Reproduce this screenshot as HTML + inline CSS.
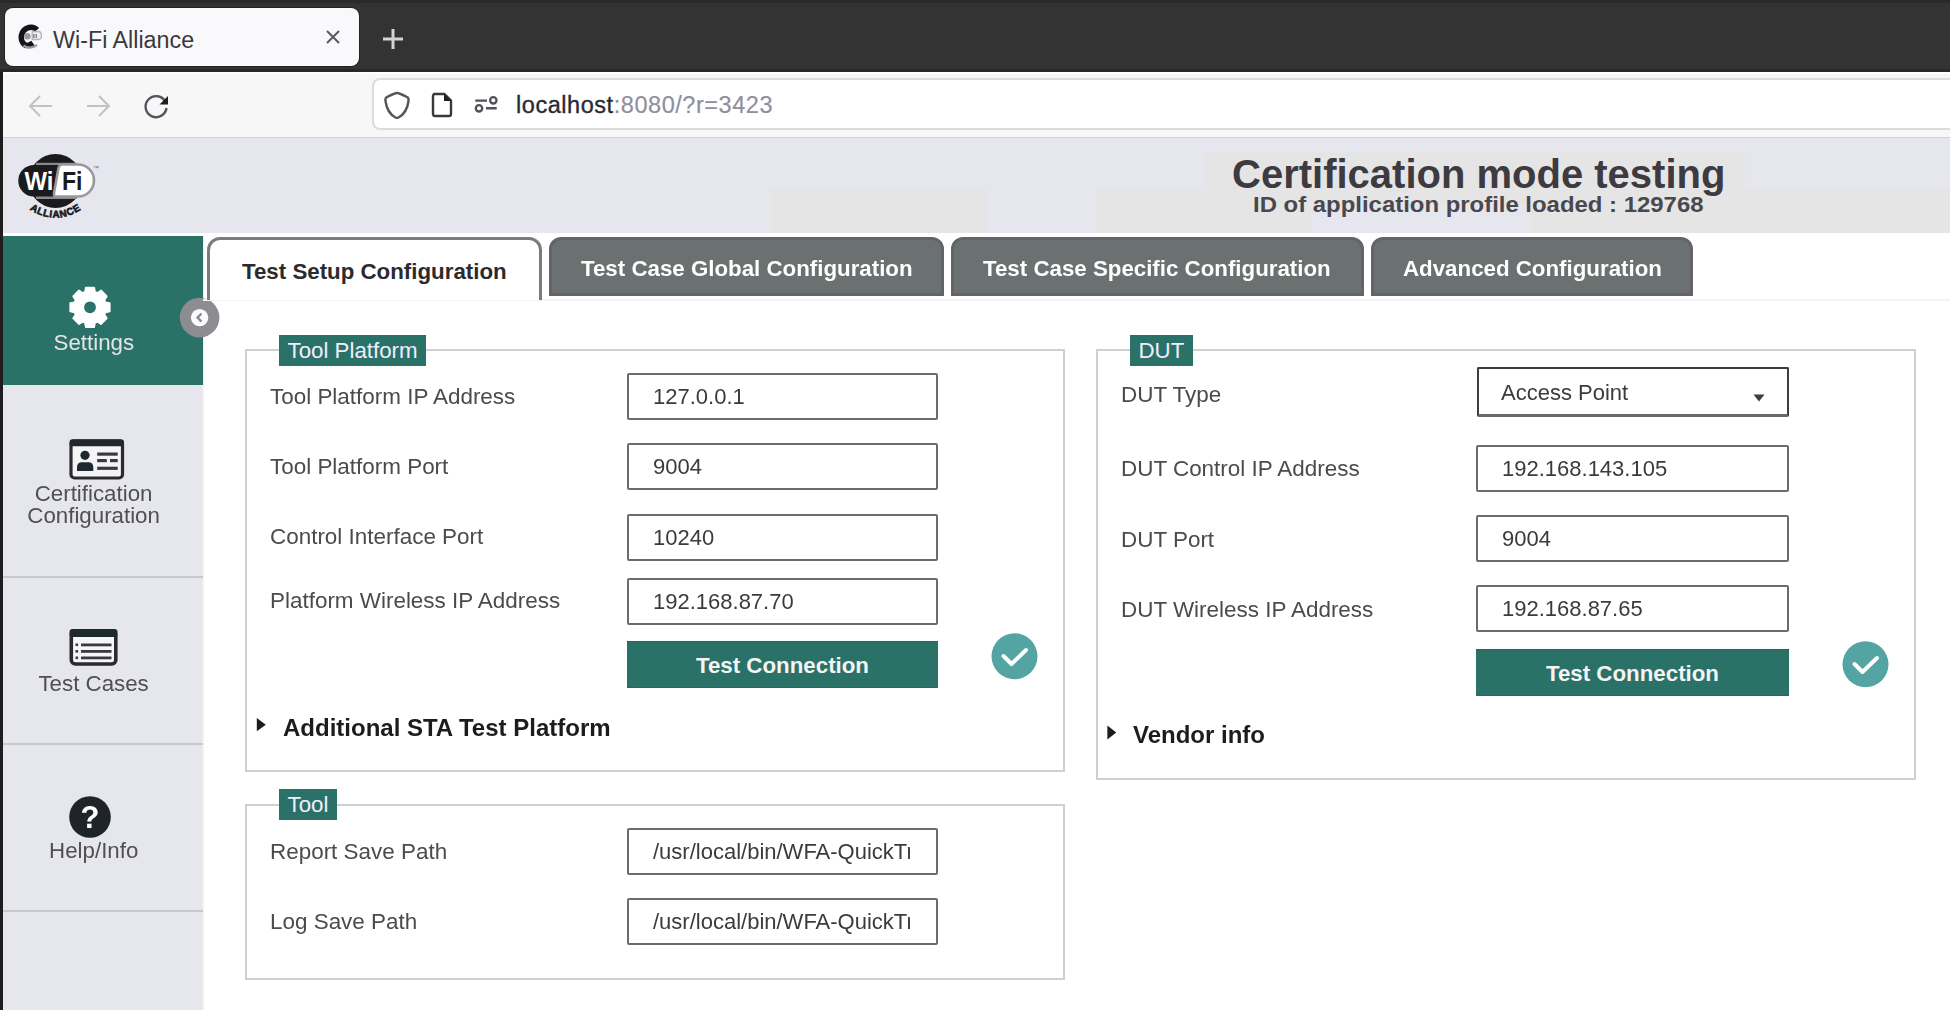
<!DOCTYPE html>
<html><head><meta charset="utf-8">
<style>
*{box-sizing:border-box}
html,body{margin:0;padding:0}
body{width:1950px;height:1010px;overflow:hidden;position:relative;background:#fff;font-family:"Liberation Sans",sans-serif}
.a{position:absolute}
.t{white-space:nowrap;line-height:1}
/* browser chrome */
#strip{left:0;top:0;width:1950px;height:72px;background:#333;border-top:3px solid #2a2a2a;border-bottom:3px solid #282828}
#btab{left:5px;top:8px;width:354px;height:58px;background:#f9f9fb;border-radius:8px;box-shadow:0 0 0 1px #222}
#nav{left:3px;top:72px;width:1947px;height:66px;background:#f7f7f7;border-top:2px solid #fff;border-bottom:1px solid #d4d4d4}
#url{left:372px;top:78px;width:1600px;height:52px;background:#fff;border:2px solid #dcdcdc;border-radius:8px}
#lborder{left:0;top:72px;width:3px;height:938px;background:#1e1c1f}
/* header */
#hdr{left:3px;top:138px;width:1947px;height:95px;background:#e6e6ee}
#side{left:3px;top:236px;width:201px;height:774px;background:#e6e6ed;border-right:2px solid #f1eff3}
#set{left:3px;top:236px;width:200px;height:149px;background:#2a7168}
.sep{left:3px;width:200px;height:2px;background:#c9c9cb}
.stxt{color:#4f4f52;font-size:22px;text-align:center;width:200px;left:3px;line-height:21.5px}
/* tabs */
.tab{top:237px;height:59px;background:#6b7170;border:3px solid #646369;border-radius:12px 12px 0 0;color:#fff;font-weight:bold;font-size:22.3px;padding-left:29px;line-height:57px}
#tab1{left:207px;top:237px;width:335px;height:63px;background:#fff;border:3px solid #7b7b7d;border-bottom:none;border-radius:13px 13px 0 0;color:#2b2b2e;font-weight:bold;font-size:22.3px;padding-left:32px;line-height:64px}
/* fieldsets */
.fs{border:2px solid #cfcfd1}
.lg{background:#2a7168;color:#eef;font-size:22.3px;line-height:25px;padding:3px 8.5px;height:31px}
.lbl{color:#4b4b4e;font-size:22.45px}
.inp{border:2px solid #6d6b6f;border-radius:2px;background:#fff;height:47px;width:312px;color:#3b3b3e;font-size:22px;padding-left:24px;line-height:43px;overflow:hidden;white-space:nowrap}
.btn{background:#2a7168;color:#f4f4f4;font-weight:bold;font-size:22.3px;text-align:center;width:312px;height:47px;line-height:47px;border-top:1px solid #1f6b62;border-bottom:1px solid #1f6b62}
.chk{width:46px;height:46px;border-radius:50%;background:#53a4a2}
.sum{color:#1c1b1e;font-weight:bold;font-size:24px}
</style></head><body><div id="wrap" style="position:absolute;left:0;top:0;width:1950px;height:1010px;filter:blur(0.45px)">

<!-- Browser tab strip -->
<div id="strip" class="a"></div>
<div id="btab" class="a"></div>
<div id="nav" class="a"></div>
<div id="url" class="a"></div>
<div id="lborder" class="a"></div>

<!-- favicon -->
<svg class="a" style="left:12px;top:20px" width="36" height="36" viewBox="0 0 36 36"><g transform="translate(17 15.5) scale(0.8) translate(-16 -15)">
 <path d="M26,8 Q22,3.5 16,5 Q8,7 6.5,15 Q5.5,22 10,26 Q14,29.5 21,24.5" stroke="#151517" stroke-width="7" fill="none"/>
 <circle cx="14" cy="16" r="4" fill="#9a9a9e"/>
 <path d="M20,10 H28 Q31.5,10 31.5,15 Q31.5,20 28,20 H20 Z" fill="#eee" stroke="#b5b5b8" stroke-width="1.6"/>
 <path d="M22,13 v5 M25,13 v5" stroke="#777" stroke-width="1.6"/>
 <path d="M9,27.5 Q17,33 26,27" stroke="#9a9a9e" stroke-width="3" fill="none"/></g>
</svg>
<div class="a t" style="left:53px;top:28.5px;font-size:23.3px;color:#3a393e">Wi-Fi Alliance</div>
<svg class="a" style="left:324px;top:28px" width="18" height="18" viewBox="0 0 18 18"><path d="M3,3 L15,15 M15,3 L3,15" stroke="#5a5960" stroke-width="2"/></svg>
<svg class="a" style="left:382px;top:28px" width="22" height="22" viewBox="0 0 22 22"><path d="M11,1 V21 M1,11 H21" stroke="#d4d4d6" stroke-width="3"/></svg>
<!-- nav icons -->
<svg class="a" style="left:28px;top:94px" width="26" height="24" viewBox="0 0 26 24"><path d="M24,12 H3 M12,2 L2,12 L12,22" stroke="#c2c2c5" stroke-width="2" fill="none"/></svg>
<svg class="a" style="left:85px;top:94px" width="26" height="24" viewBox="0 0 26 24"><path d="M2,12 H23 M14,2 L24,12 L14,22" stroke="#c2c2c5" stroke-width="2" fill="none"/></svg>
<svg class="a" style="left:142px;top:93px" width="28" height="27" viewBox="0 0 28 27"><path d="M23.5,9 A10.5,10.5 0 1 0 24.5,15" stroke="#55545c" stroke-width="2.4" fill="none"/><path d="M26,3 L26,11.5 L17.5,11.5 Z" fill="#1d1d22"/></svg>
<svg class="a" style="left:383px;top:91px" width="28" height="30" viewBox="0 0 28 30"><path d="M14,2 Q16,2 24,6 Q26,7 25.5,10 C24.5,18 21,23.5 15.5,26.5 Q14,27.3 12.5,26.5 C7,23.5 3.5,18 2.5,10 Q2,7 4,6 Q12,2 14,2 Z" stroke="#55545c" stroke-width="2.4" fill="none" stroke-linejoin="round"/></svg>
<svg class="a" style="left:429px;top:91px" width="26" height="28" viewBox="0 0 26 28"><path d="M5,3 H15.5 L22,9.5 V23 Q22,25 20,25 H6 Q4,25 4,23 V5 Q4,3 6,3 Z" stroke="#3a393f" stroke-width="2.4" fill="none" stroke-linejoin="round"/><path d="M15,3 L22,10 L15,10 Z" fill="#1d1d22"/></svg>
<svg class="a" style="left:472px;top:94px" width="28" height="22" viewBox="0 0 28 22"><path d="M3.3,6.6 H15 M14,14.3 H24.7" stroke="#505056" stroke-width="2.4" fill="none"/><circle cx="21.3" cy="6.3" r="3.2" stroke="#505056" stroke-width="2.3" fill="none"/><circle cx="7" cy="14.3" r="3.2" stroke="#505056" stroke-width="2.3" fill="none"/></svg>
<div class="a t" style="left:516px;top:94.0px;font-size:23.5px;letter-spacing:0.55px;color:#2b2a33;-webkit-text-stroke:0.35px #2b2a33">localhost<span style="color:#8f8f9d;-webkit-text-stroke:0.2px #8f8f9d">:8080/?r=3423</span></div>


<!-- header -->
<div id="hdr" class="a"></div>
<div class="a" style="left:770px;top:189px;width:216px;height:44px;background:#e5e5e6"></div>
<div class="a" style="left:1096px;top:189px;width:854px;height:44px;background:#e5e5e6"></div>
<div class="a" style="left:1205px;top:152px;width:540px;height:37px;background:#e5e5e6"></div>
<div class="a" style="left:1311px;top:206px;width:219px;height:27px;background:#e6e6ee"></div>
<div id="side" class="a"></div>
<div id="set" class="a"></div>
<div class="a sep" style="top:576px"></div>
<div class="a sep" style="top:743px"></div>
<div class="a sep" style="top:910px"></div>

<!-- logo -->
<svg class="a" style="left:0;top:137px" width="120" height="97" viewBox="0 137 120 97">
 <circle cx="55.5" cy="181" r="27" fill="#1b1a1d"/>
 <rect x="36" y="162.8" width="41" height="3" fill="#8a898d"/>
 <rect x="36" y="195.8" width="41" height="3.2" fill="#8a898d"/>
 <rect x="18.3" y="165" width="60" height="31.5" rx="15.7" fill="#1b1a1d"/>
 <path d="M62,164.5 H78 A15.8,15.8 0 0 1 78,196.5 H56 Q53.5,196.5 54,193 L58.5,168 Q59.5,164.5 62,164.5 Z" fill="#fff" stroke="#99989c" stroke-width="2.6"/>
 <text x="24.5" y="190" textLength="29" lengthAdjust="spacingAndGlyphs" font-family="Liberation Sans" font-weight="bold" font-size="25" fill="#fff">Wi</text>
 <text x="62" y="190" textLength="20.5" lengthAdjust="spacingAndGlyphs" font-family="Liberation Sans" font-weight="bold" font-size="25" fill="#1b1a1d">Fi</text>
 <text x="93" y="170" font-family="Liberation Sans" font-size="6" fill="#666">™</text>
 <path id="arc" d="M23,204.5 Q55.5,231 88,204.5" fill="none"/>
 <text font-family="Liberation Sans" font-weight="bold" font-size="10" fill="#1b1a1d" stroke="#1b1a1d" stroke-width="0.6" letter-spacing="0.6"><textPath href="#arc" startOffset="50%" text-anchor="middle">ALLIANCE</textPath></text>
</svg>
<div class="a t" style="left:1232px;top:153.8px;font-size:40px;font-weight:bold;color:#3d3a40">Certification mode testing</div>
<div class="a t" style="left:1253px;top:194.2px;font-size:22px;font-weight:bold;color:#4a484d;transform:scaleX(1.087);transform-origin:0 0">ID of application profile loaded : 129768</div>

<svg class="a" style="left:60px;top:280px" width="60" height="60" viewBox="60 280 60 60">
 <path fill-rule="evenodd" fill="#fff" stroke="#fff" stroke-width="1.6" stroke-linejoin="round" d="M84.9,291.9 L85.8,287.5 L94.2,287.5 L95.1,291.9 L97.3,292.8 L101.0,290.4 L106.9,296.3 L104.5,300.0 L105.4,302.2 L109.8,303.1 L109.8,311.5 L105.4,312.4 L104.5,314.6 L106.9,318.3 L101.0,324.2 L97.3,321.8 L95.1,322.7 L94.2,327.1 L85.8,327.1 L84.9,322.7 L82.7,321.8 L79.0,324.2 L73.1,318.3 L75.5,314.6 L74.6,312.4 L70.2,311.5 L70.2,303.1 L74.6,302.2 L75.5,300.0 L73.1,296.3 L79.0,290.4 L82.7,292.8Z M90,300.6 A6.7,6.7 0 1 0 90,314 A6.7,6.7 0 1 0 90,300.6 Z"/>
</svg>
<div class="a t" style="left:-6.2px;width:200px;text-align:center;top:332.1px;font-size:22.3px;color:#e4e4e6">Settings</div>
<!-- collapse btn -->
<svg class="a" style="left:178px;top:296px" width="44" height="44" viewBox="0 0 44 44"><circle cx="21.6" cy="21.6" r="19.8" fill="#8d8c90"/><circle cx="21.6" cy="21.6" r="8.7" fill="#fbfbfb"/><path d="M23.5,17.5 L19.5,21.6 L23.5,25.7" stroke="#8d8c90" stroke-width="2.4" fill="none"/></svg>
<!-- cert config icon -->
<svg class="a" style="left:66px;top:436px" width="62" height="48" viewBox="66 436 62 48">
 <rect x="71" y="441" width="51.5" height="37" rx="3.5" fill="#f4f4f6" stroke="#2b2a30" stroke-width="3.2"/>
 <rect x="69.5" y="439.3" width="54.5" height="7" rx="3" fill="#22272c"/>
 <circle cx="85" cy="455.3" r="4.6" fill="#1f2a30"/>
 <path d="M77,471 V467.5 Q77,462.3 82,462.3 H88.3 Q93.3,462.3 93.3,467.5 V471 Z" fill="#1f2a30"/>
 <rect x="97.2" y="452.5" width="20.5" height="3.2" fill="#3a3940"/>
 <rect x="97.2" y="459" width="9.6" height="3.2" fill="#3a3940"/>
 <rect x="110" y="459" width="7.7" height="3.2" fill="#3a3940"/>
 <rect x="97.2" y="466.7" width="20.5" height="3.2" fill="#3a3940"/>
</svg>
<div class="a t" style="left:-6.4px;width:200px;text-align:center;top:483.3px;font-size:22.3px;color:#505053">Certification</div>
<div class="a t" style="left:-6.4px;width:200px;text-align:center;top:505.4px;font-size:22.3px;color:#505053">Configuration</div>
<!-- test cases icon -->
<svg class="a" style="left:66px;top:626px" width="56" height="44" viewBox="66 626 56 44">
 <rect x="71.3" y="631" width="44.5" height="33" rx="4" fill="#f6f6f8" stroke="#2b2a30" stroke-width="3.6"/>
 <rect x="69.5" y="629" width="48" height="8" rx="3" fill="#1f2a30"/>
 <rect x="75.5" y="643.5" width="2.6" height="2.6" fill="#3a3940"/>
 <rect x="75.5" y="650" width="2.6" height="2.6" fill="#3a3940"/>
 <rect x="75.5" y="656.5" width="2.6" height="2.6" fill="#3a3940"/>
 <rect x="81" y="643.5" width="30.5" height="2.8" fill="#3a3940"/>
 <rect x="81" y="650" width="30.5" height="2.8" fill="#3a3940"/>
 <rect x="81" y="656.5" width="30.5" height="2.8" fill="#3a3940"/>
</svg>
<div class="a t" style="left:-6.4px;width:200px;text-align:center;top:672.6px;font-size:22.3px;color:#505053">Test Cases</div>
<!-- help -->
<svg class="a" style="left:66px;top:793px" width="48" height="48" viewBox="66 793 48 48">
 <circle cx="90" cy="817" r="20.8" fill="#1f2428"/>
 <text x="90" y="828" text-anchor="middle" font-family="Liberation Sans" font-weight="bold" font-size="31" fill="#fff">?</text>
</svg>
<div class="a t" style="left:-6.3px;width:200px;text-align:center;top:840.1px;font-size:22.3px;color:#505053">Help/Info</div>


<!-- tabs -->
<div class="a" style="left:203px;top:299px;width:1747px;height:2px;background:#f3f3f5"></div>
<div id="tab1" class="a t">Test Setup Configuration</div>
<div class="a t tab" style="left:549px;width:395px">Test Case Global Configuration</div>
<div class="a t tab" style="left:951px;width:413px">Test Case Specific Configuration</div>
<div class="a t tab" style="left:1371px;width:322px">Advanced Configuration</div>

<!-- fieldsets -->
<div class="a fs" style="left:245px;top:349px;width:820px;height:423px"></div>
<div class="a fs" style="left:245px;top:804px;width:820px;height:176px"></div>
<div class="a fs" style="left:1096px;top:349px;width:820px;height:431px"></div>


<div class="a lg t" style="left:279px;top:335px">Tool Platform</div>
<div class="a lg t" style="left:279px;top:789px">Tool</div>
<div class="a lg t" style="left:1130px;top:335px">DUT</div>
<div class="a t lbl" style="left:270px;top:385.7px">Tool Platform IP Address</div>
<div class="a inp" style="left:627px;top:373.1px;width:311px">127.0.0.1</div>
<div class="a t lbl" style="left:270px;top:455.9px">Tool Platform Port</div>
<div class="a inp" style="left:627px;top:443.3px;width:311px">9004</div>
<div class="a t lbl" style="left:270px;top:526.3px">Control Interface Port</div>
<div class="a inp" style="left:627px;top:513.7px;width:311px">10240</div>
<div class="a t lbl" style="left:270px;top:590.2px">Platform Wireless IP Address</div>
<div class="a inp" style="left:627px;top:577.6px;width:311px">192.168.87.70</div>
<div class="a btn t" style="left:627px;top:641px;width:311px">Test Connection</div>
<svg class="a" style="left:991px;top:633px" width="47" height="47" viewBox="0 0 47 47"><circle cx="23.5" cy="23.3" r="23" fill="#53a4a2"/><path d="M12.5,23 L20.5,31 L35,17" stroke="#fff" stroke-width="4" fill="none" stroke-linecap="round" stroke-linejoin="round"/></svg>
<svg class="a" style="left:255px;top:716px" width="14" height="18" viewBox="0 0 14 18"><path d="M1.8,2 L10.8,8.7 L1.8,15.3 Z" fill="#1c1b1e"/></svg>
<div class="a t sum" style="left:283px;top:716.3px">Additional STA Test Platform</div>
<div class="a t lbl" style="left:270px;top:840.6px">Report Save Path</div>
<div class="a inp" style="left:627px;top:828.0px;width:311px"><span style="display:inline-block;width:257px;overflow:hidden;vertical-align:top">/usr/local/bin/WFA-QuickTrack-Tool/report</span></div>
<div class="a t lbl" style="left:270px;top:910.6px">Log Save Path</div>
<div class="a inp" style="left:627px;top:898.0px;width:311px"><span style="display:inline-block;width:257px;overflow:hidden;vertical-align:top">/usr/local/bin/WFA-QuickTrack-Tool/log</span></div>
<div class="a t lbl" style="left:1121px;top:384.2px">DUT Type</div>
<div class="a inp" style="left:1476.5px;top:367px;width:312.5px;height:50px;border-color:#3d3c41;border-bottom:3px solid #69686c;padding-left:22.5px;padding-top:2px;line-height:43px">Access Point</div>
<svg class="a" style="left:1752px;top:393px" width="14" height="10" viewBox="0 0 14 10"><path d="M1.5,1.5 L12.5,1.5 L7,8.5 Z" fill="#3d3c41"/></svg>
<div class="a t lbl" style="left:1121px;top:457.6px">DUT Control IP Address</div>
<div class="a inp" style="left:1476px;top:445.0px;width:313px">192.168.143.105</div>
<div class="a t lbl" style="left:1121px;top:528.6px">DUT Port</div>
<div class="a inp" style="left:1476px;top:515.0px;width:313px">9004</div>
<div class="a t lbl" style="left:1121px;top:598.7px">DUT Wireless IP Address</div>
<div class="a inp" style="left:1476px;top:585.1px;width:313px">192.168.87.65</div>
<div class="a btn t" style="left:1476px;top:649px;width:313px">Test Connection</div>
<svg class="a" style="left:1842px;top:641px" width="47" height="47" viewBox="0 0 47 47"><circle cx="23.5" cy="23.3" r="23" fill="#53a4a2"/><path d="M12.5,23 L20.5,31 L35,17" stroke="#fff" stroke-width="4" fill="none" stroke-linecap="round" stroke-linejoin="round"/></svg>
<svg class="a" style="left:1106px;top:723px" width="14" height="18" viewBox="0 0 14 18"><path d="M1.4,2.6 L10.2,9.5 L1.4,16.5 Z" fill="#1c1b1e"/></svg>
<div class="a t sum" style="left:1133px;top:723.3px">Vendor info</div>
</div></body></html>
